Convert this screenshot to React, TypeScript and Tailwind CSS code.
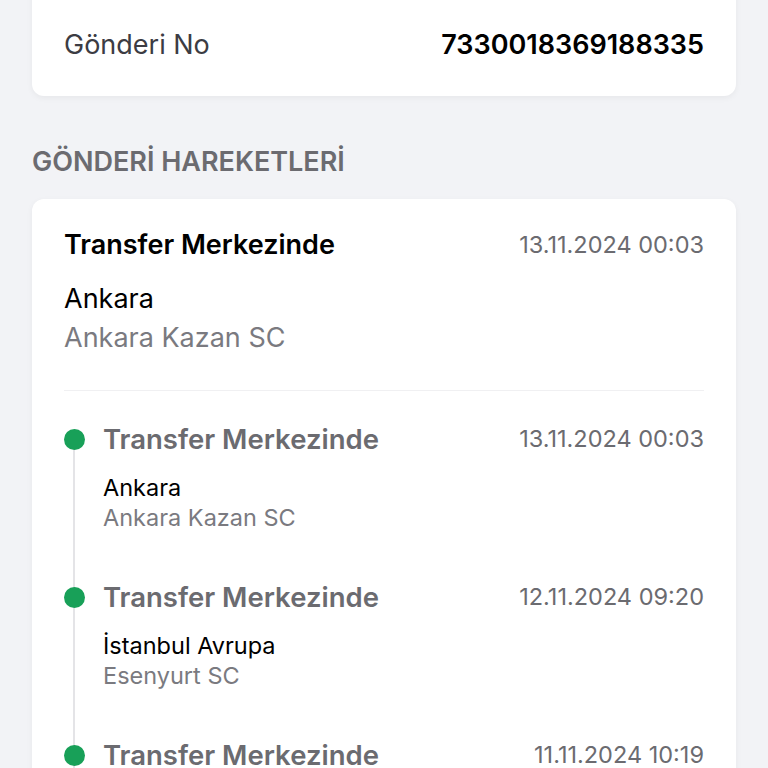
import { Fragment } from 'react'

const moves = [
  { title: 'Transfer Merkezinde', date: '13.11.2024 00:03', city: 'Ankara', branch: 'Ankara Kazan SC' },
  { title: 'Transfer Merkezinde', date: '12.11.2024 09:20', city: 'İstanbul Avrupa', branch: 'Esenyurt SC' },
  { title: 'Transfer Merkezinde', date: '11.11.2024 10:19', city: 'İstanbul Avrupa', branch: 'Esenyurt SC' },
]

export default function App() {
  return (
    <div className="h-[768px] overflow-hidden bg-[#f2f3f6] px-8 font-['Inter',sans-serif]">
      {/* Gönderi bilgileri */}
      <div className="-mt-[42px] rounded-b-xl bg-white px-8 pb-[22px] shadow-[0_2px_6px_rgba(0,0,0,0.05)]">
        <div className="flex h-[58px] items-center justify-between text-[27px] leading-7">
          <span className="text-[#3c3c43]">Gönderen</span>
          <span className="font-semibold text-black">5230014816</span>
        </div>
        <div className="flex h-[58px] items-center justify-between text-[27px] leading-7">
          <span className="text-[#3c3c43]">Gönderi No</span>
          <span className="font-semibold text-black">7330018369188335</span>
        </div>
      </div>

      <h2 className="mt-[50px] text-[27px] font-semibold leading-8 text-[#6b6b70]">GÖNDERİ HAREKETLERİ</h2>

      {/* Son hareket */}
      <div className="mt-[21px] rounded-xl bg-white px-8 pt-8 shadow-[0_2px_6px_rgba(0,0,0,0.05)]">
        <div className="flex items-center justify-between">
          <span className="text-[27px] font-semibold leading-7 text-black">Transfer Merkezinde</span>
          <span className="text-[23.5px] leading-7 text-[#6b6b70]">13.11.2024 00:03</span>
        </div>
        <div className="mt-[26px] text-[27px] leading-7 text-black">Ankara</div>
        <div className="mt-[11px] text-[27px] leading-7 text-[#7a7a80]">Ankara Kazan SC</div>
        <div className="mt-[38px] h-px bg-[#f0f0f2]" />

        {/* Zaman çizelgesi */}
        <div className="relative pt-[34px]">
          <div className="absolute left-[9px] top-[50px] bottom-0 w-[2px] bg-[#e4e4e7]" />
          {moves.map((m, i) => (
            <Fragment key={i}>
              <div className="relative flex h-[158px] flex-col">
                <div className="flex items-center justify-between">
                  <div className="flex items-center gap-[18px]">
                    <span className="relative z-10 h-[21px] w-[21px] rounded-full bg-[#18a058]" />
                    <span className="text-[27.5px] font-semibold leading-7 text-[#6b6b70]">{m.title}</span>
                  </div>
                  <span className="text-[23.5px] leading-7 text-[#6b6b70]">{m.date}</span>
                </div>
                <div className="ml-[39px] mt-[21px] text-[23.5px] leading-7 text-black">{m.city}</div>
                <div className="ml-[39px] mt-[2px] text-[23.5px] leading-7 text-[#7a7a80]">{m.branch}</div>
              </div>
            </Fragment>
          ))}
        </div>
      </div>
    </div>
  )
}
